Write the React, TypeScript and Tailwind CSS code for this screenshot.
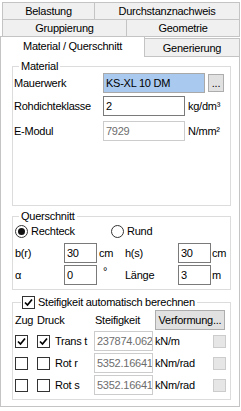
import React from 'react';

const Tab = ({ label, className = '' }: { label: string; className?: string }) => (
  <div
    className={`flex items-center justify-center pt-px border border-[#c4c4c4] bg-[#f0f0f0] ${className}`}
  >
    {label}
  </div>
);

const Box = ({
  text,
  className = '',
  muted = false,
}: {
  text: string;
  className?: string;
  muted?: boolean;
}) => (
  <div
    className={`h-[20px] flex items-center pl-[2px] overflow-hidden whitespace-nowrap border ${
      muted ? 'border-[#cccccc] text-[#6d6d6d]' : 'border-[#7a7a7a]'
    } bg-white ${className}`}
  >
    {text}
  </div>
);

const Check = ({ checked = false }: { checked?: boolean }) => (
  <div className="w-[13px] h-[13px] shrink-0 border border-[#333333] bg-white flex items-center justify-center">
    {checked && (
      <svg width="9" height="9" viewBox="0 0 9 9">
        <path d="M1 4.5 L3.5 7 L8 1.5" fill="none" stroke="#000" strokeWidth="1.7" />
      </svg>
    )}
  </div>
);

const Radio = ({ checked = false }: { checked?: boolean }) => (
  <div className="w-[13px] h-[13px] shrink-0 rounded-full border border-[#333333] bg-white flex items-center justify-center">
    {checked && <div className="w-[7px] h-[7px] rounded-full bg-[#111111]" />}
  </div>
);

const rows = [
  { zug: true, druck: true, name: 'Trans t', value: '237874.0625', unit: 'kN/m' },
  { zug: false, druck: false, name: 'Rot r', value: '5352.16641', unit: 'kNm/rad' },
  { zug: false, druck: false, name: 'Rot s', value: '5352.16641', unit: 'kNm/rad' },
];

export default function App() {
  return (
    <div className="w-[241px] h-[411px] bg-white text-black font-['Liberation_Sans',Arial,sans-serif] text-[11px] tracking-[-0.25px] leading-[13px] overflow-hidden">
      {/* tab strip */}
      <div className="flex mt-[2px] ml-[2px] h-[18px]">
        <Tab label="Belastung" className="w-[93px]" />
        <Tab label="Durchstanznachweis" className="w-[146px] -ml-px" />
      </div>
      <div className="flex -mt-px ml-[2px] h-[18px]">
        <Tab label="Gruppierung" className="w-[125px]" />
        <Tab label="Geometrie" className="w-[114px] -ml-px" />
      </div>
      <div className="flex items-end -mt-px h-[21px]">
        <div className="relative z-10 w-[145px] h-[21px] flex items-center justify-center pb-[2px] border border-b-0 border-[#c4c4c4] bg-white">
          Material / Querschnitt
        </div>
        <Tab label="Generierung" className="w-[96px] h-[19px] -ml-px" />
      </div>

      {/* tab page */}
      <div className="-mt-px w-[240px] h-[351px] border border-[#c4c4c4] bg-white">
        <fieldset className="mt-[3px] ml-[11px] w-[219px] h-[146px] border border-[#dcdcdc]">
          <legend className="ml-[6px] px-[2px] leading-[13px]">Material</legend>
          <div className="flex items-center h-[20px] pl-px">
            <span className="w-[89px]">Mauerwerk</span>
            <div className="w-[102px] h-[20px] flex items-center pl-[2px] border border-[#a9a9a9] bg-[#a9c9ef]">
              KS-XL 10 DM
            </div>
            <button className="ml-[3px] w-[16px] h-[18px] border border-[#adadad] bg-[#e1e1e1] flex items-end justify-center pb-[2px] leading-none">
              ...
            </button>
          </div>
          <div className="flex items-center h-[20px] pl-px mt-[3px]">
            <span className="w-[89px]">Rohdichteklasse</span>
            <Box text="2" className="w-[82px]" />
            <span className="ml-[3px]">kg/dm³</span>
          </div>
          <div className="flex items-center h-[20px] pl-px mt-[5px]">
            <span className="w-[89px]">E-Modul</span>
            <Box text="7929" className="w-[82px]" muted />
            <span className="ml-[3px]">N/mm²</span>
          </div>
        </fieldset>

        <fieldset className="mt-[4px] ml-[11px] w-[219px] h-[80px] border border-[#dcdcdc]">
          <legend className="ml-[6px] px-[2px] leading-[13px]">Querschnitt</legend>
          <div className="flex items-center h-[17px] pl-[2px]">
            <Radio checked />
            <span className="ml-[3px] w-[80px]">Rechteck</span>
            <Radio />
            <span className="ml-[3px]">Rund</span>
          </div>
          <div className="flex items-center h-[20px] pl-[2px] mt-[3px]">
            <span className="w-[49px]">b(r)</span>
            <Box text="30" className="w-[33px]" />
            <span className="ml-[2px] w-[26px]">cm</span>
            <span className="w-[53px]">h(s)</span>
            <Box text="30" className="w-[33px]" />
            <span className="ml-[1px]">cm</span>
          </div>
          <div className="flex items-center h-[20px] pl-[2px] mt-[2px]">
            <span className="w-[49px]">α</span>
            <Box text="0" className="w-[33px]" />
            <span className="ml-[6px] w-[22px] self-start">°</span>
            <span className="w-[53px]">Länge</span>
            <Box text="3" className="w-[33px]" />
            <span className="ml-[1px]">m</span>
          </div>
        </fieldset>

        <fieldset className="mt-[5px] ml-[11px] w-[219px] h-[105px] border border-[#dcdcdc]">
          <legend className="ml-[8px] pl-px pr-[2px]">
            <span className="flex items-center h-[14px]">
              <Check checked />
              <span className="ml-[3px]">Steifigkeit automatisch berechnen</span>
            </span>
          </legend>
          <div className="flex items-center h-[20px] mt-px pl-[2px]">
            <span className="w-[22px]">Zug</span>
            <span className="w-[58px]">Druck</span>
            <span className="w-[60px]">Steifigkeit</span>
            <button className="w-[70px] h-[20px] border border-[#adadad] bg-[#e1e1e1] flex items-center justify-center">
              Verformung...
            </button>
          </div>
          <div className="flex flex-col gap-[2px] mt-px">
            {rows.map((r) => (
              <div key={r.name} className="flex items-center h-[20px] pl-[2px]">
                <Check checked={r.zug} />
                <div className="ml-[9px]">
                  <Check checked={r.druck} />
                </div>
                <span className="ml-[5px] w-[39px]">{r.name}</span>
                <Box text={r.value} className="w-[59px]" muted />
                <span className="ml-[2px] w-[58px]">{r.unit}</span>
                <div className="w-[13px] h-[13px] border border-[#cccccc] bg-[#e6e6e6]" />
              </div>
            ))}
          </div>
        </fieldset>
      </div>
    </div>
  );
}
